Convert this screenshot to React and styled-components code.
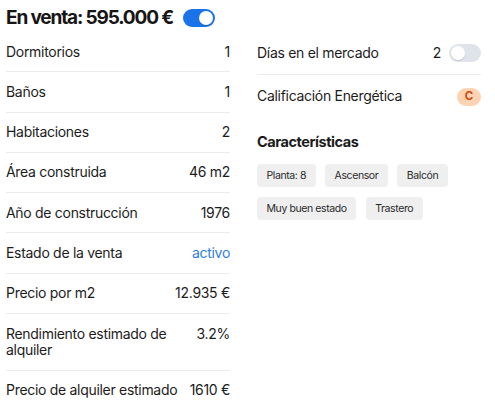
import React from "react";
import styled, { createGlobalStyle } from "styled-components";

const Global = createGlobalStyle`
  html, body { margin: 0; padding: 0; background: #ffffff; }
  body { font-family: Inter, "Noto Sans", "Liberation Sans", sans-serif; color: #1c1c1c; }
  * { box-sizing: border-box; }
`;

const Page = styled.div`
  padding: 0 6px;
  width: 495px;
`;

const Header = styled.div`
  display: flex;
  align-items: center;
  gap: 10px;
  height: 28px;
  margin-top: 4px;
`;

const Title = styled.h1`
  margin: 0;
  font-size: 19px;
  font-weight: 700;
  letter-spacing: -1.15px;
  line-height: 24px;
  color: #161616;
`;

const Toggle = styled.span`
  position: relative;
  display: inline-block;
  width: 32px;
  height: 18px;
  border-radius: 9px;
  background: ${(p) => (p.$on ? "#1a73e8" : "#dfe3ea")};
  flex: none;
  &::after {
    content: "";
    position: absolute;
    top: 2px;
    left: ${(p) => (p.$on ? "16px" : "2px")};
    width: 14px;
    height: 14px;
    border-radius: 50%;
    background: #ffffff;
    box-shadow: 0 1px 1px rgba(0, 0, 0, 0.12);
  }
`;

const Columns = styled.div`
  display: grid;
  grid-template-columns: 224px 224px;
  column-gap: 27px;
  align-items: start;
`;

const List = styled.div`
  display: flex;
  flex-direction: column;
`;

const Row = styled.div`
  display: flex;
  align-items: ${(p) => (p.$center ? "center" : "flex-start")};
  justify-content: space-between;
  gap: 8px;
  padding: 11.5px 0;
  min-height: ${(p) => p.$minH || 40}px;
  font-size: 14px;
  letter-spacing: -0.3px;
  line-height: 16.3px;
  border-bottom: ${(p) => (p.$last ? "none" : "1px solid #ececec")};
`;

const Label = styled.span`
  flex: 1;
  min-width: 0;
`;

const Value = styled.span`
  flex: none;
  display: flex;
  align-items: center;
  gap: 8px;
  color: ${(p) => (p.$link ? "#2f7de1" : "inherit")};
`;

const Badge = styled.span`
  display: inline-flex;
  align-items: center;
  justify-content: center;
  width: 24px;
  height: 18px;
  border-radius: 9px;
  background: #fdd3b4;
  color: #c94a10;
  font-size: 11.5px;
  font-weight: 700;
  letter-spacing: 0;
`;

const SubTitle = styled.h2`
  margin: 14px 0 0;
  font-size: 14.5px;
  font-weight: 700;
  line-height: 20px;
  letter-spacing: -0.45px;
`;

const Chips = styled.div`
  display: flex;
  flex-wrap: wrap;
  gap: 10px 9.5px;
  margin-top: 12px;
`;

const Chip = styled.span`
  display: inline-flex;
  align-items: center;
  height: 23px;
  padding: 0 9.5px;
  border-radius: 4px;
  background: #efefef;
  font-size: 10.5px;
  letter-spacing: -0.4px;
  color: #2a2a2a;
`;

const leftRows = [
  ["Dormitorios", "1"],
  ["Baños", "1"],
  ["Habitaciones", "2"],
  ["Área construida", "46 m2"],
  ["Año de construcción", "1976"],
  ["Estado de la venta", "activo", true],
  ["Precio por m2", "12.935 €"],
  ["Rendimiento estimado de alquiler", "3.2%"],
  ["Precio de alquiler estimado", "1610 €"],
];

const chips = ["Planta: 8", "Ascensor", "Balcón", "Muy buen estado", "Trastero"];

export default function App() {
  return (
    <>
      <Global />
      <Page>
        <Header>
          <Title>En venta: 595.000 €</Title>
          <Toggle $on />
        </Header>
        <Columns>
          <List>
            {leftRows.map(([l, v, link], i) => (
              <Row key={l} $last={i === leftRows.length - 1}>
                <Label>{l}</Label>
                <Value $link={link}>{v}</Value>
              </Row>
            ))}
          </List>
          <div>
            <List>
              <Row $center $minH={43}>
                <Label>Días en el mercado</Label>
                <Value>
                  2 <Toggle />
                </Value>
              </Row>
              <Row $center $minH={43} $last>
                <Label>Calificación Energética</Label>
                <Value>
                  <Badge>C</Badge>
                </Value>
              </Row>
            </List>
            <SubTitle>Características</SubTitle>
            <Chips>
              {chips.map((c) => (
                <Chip key={c}>{c}</Chip>
              ))}
            </Chips>
          </div>
        </Columns>
      </Page>
    </>
  );
}
